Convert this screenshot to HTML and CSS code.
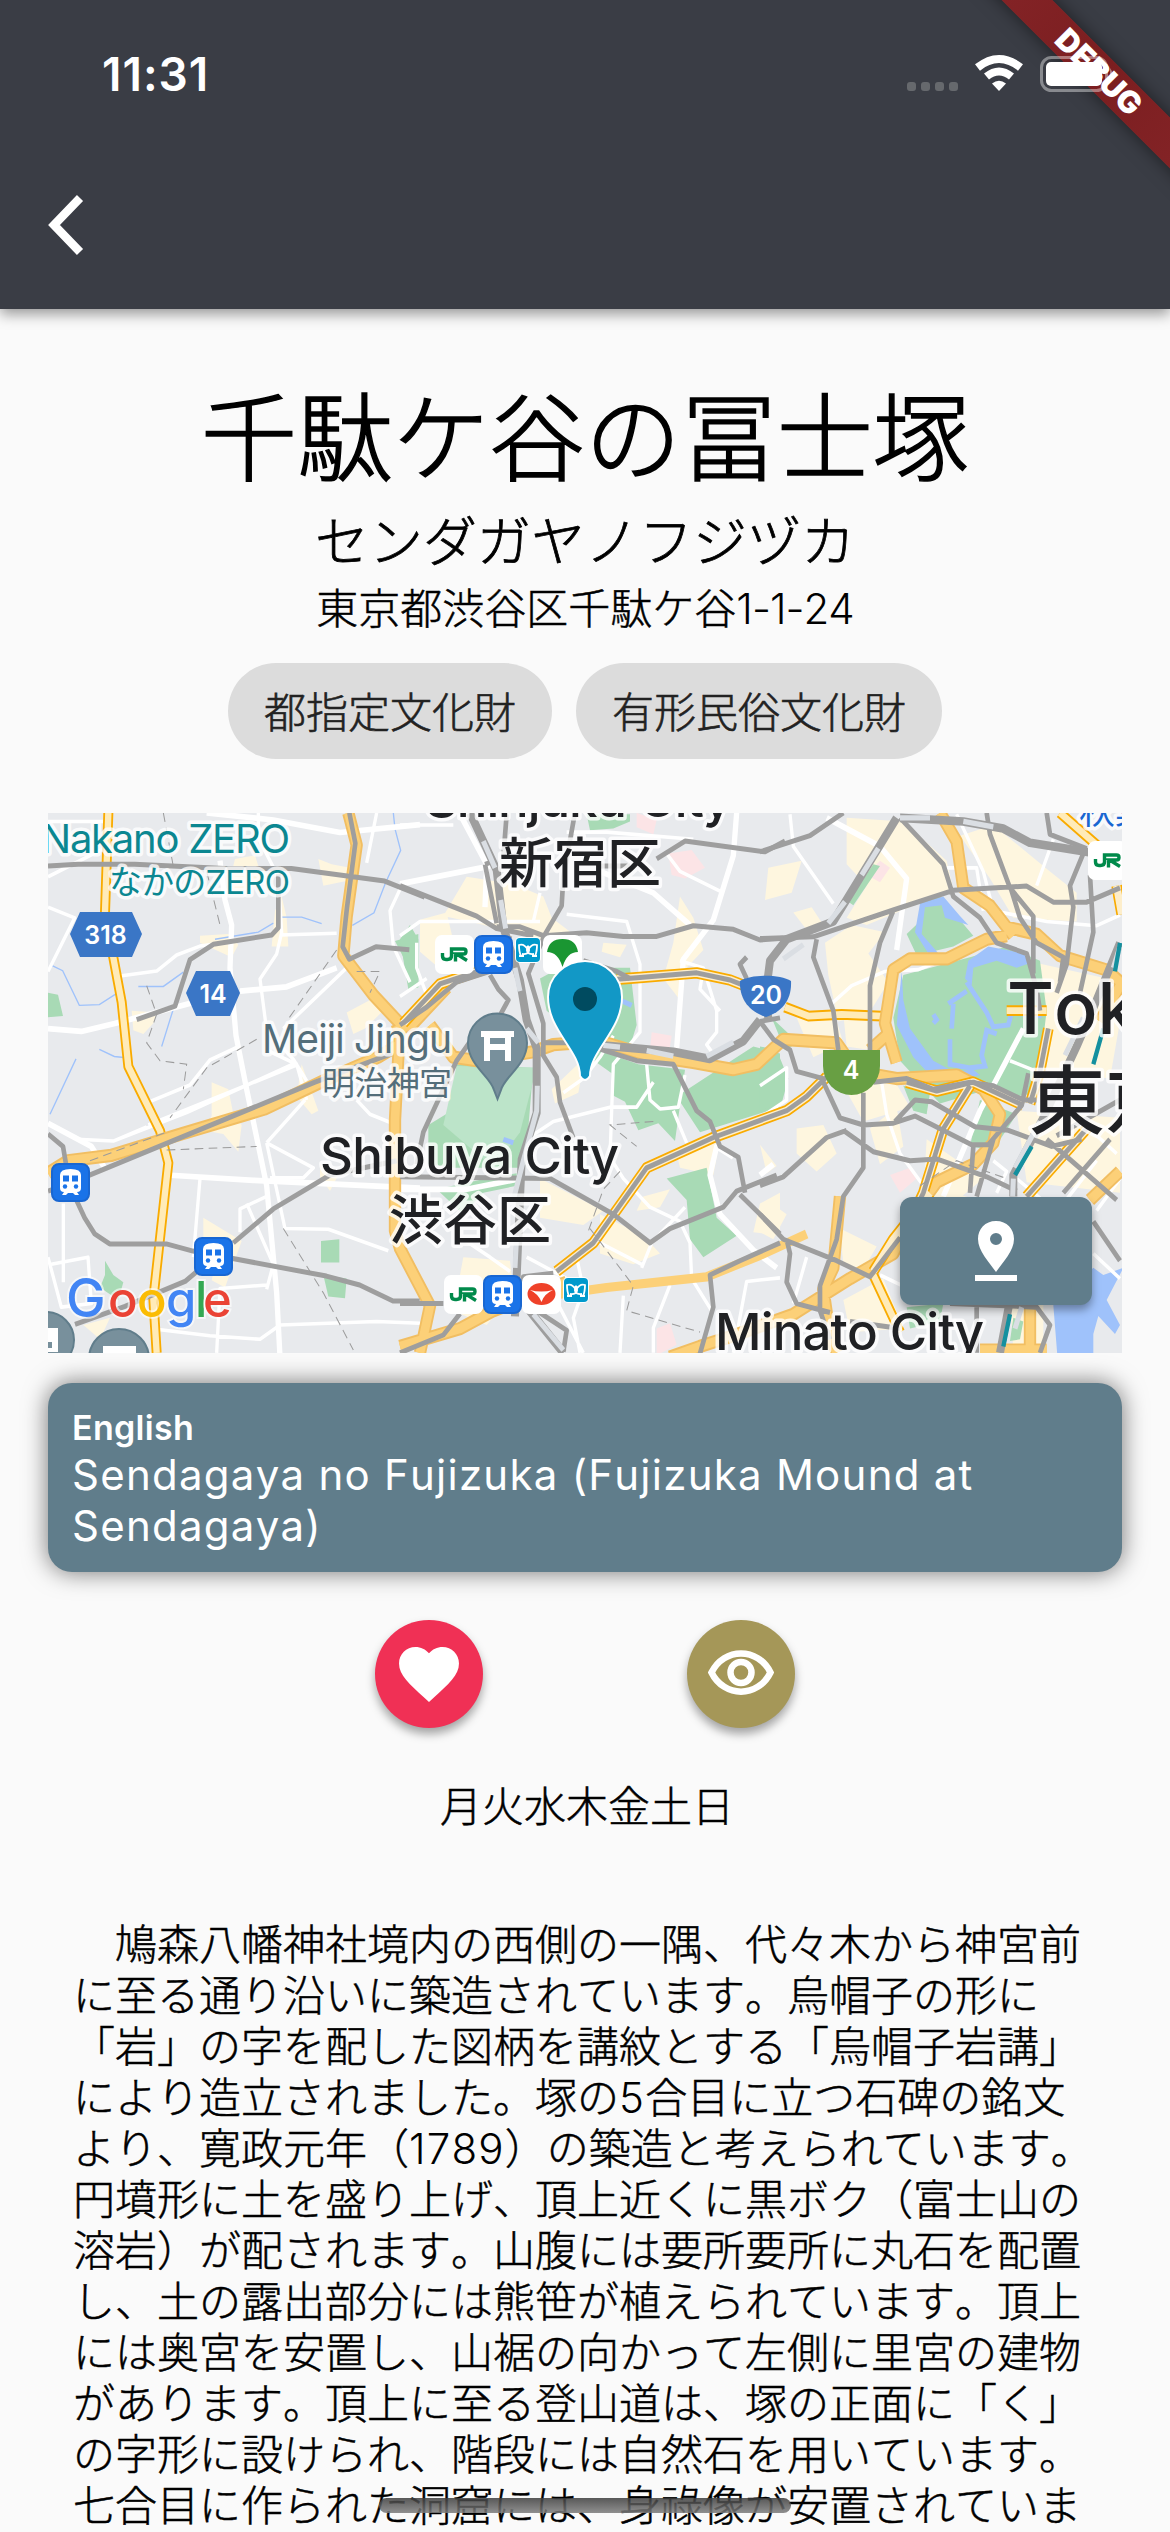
FILE: index.html
```html
<!DOCTYPE html>
<html lang="ja">
<head>
<meta charset="utf-8">
<title>千駄ケ谷の冨士塚</title>
<link rel="stylesheet" href="styles.css">
</head>
<body>
<div class="screen">
<header class="app-bar">
  <div class="status-bar">
    <span class="clock">11:31</span>
    <svg class="status-icons" viewBox="907 50 203 46" aria-hidden="true">
      <g fill="#66696d"><rect x="907" y="82" width="9" height="9" rx="3"/><rect x="921" y="82" width="9" height="9" rx="3"/><rect x="935" y="82" width="9" height="9" rx="3"/><rect x="949" y="82" width="9" height="9" rx="3"/></g>
      <path fill="none" stroke="#fff" stroke-width="8" d="M977.5 67.5Q999 50.500 1020.500 67.500M986.500 76.500Q999 66.500 1011.500 76.500"/>
      <path fill="#fff" d="M992 83.500Q999 77.800 1006 83.500L999 91z"/>
    </svg>
  </div>
  <svg class="back" viewBox="0 0 40 64" aria-hidden="true"><path d="M33 5L7 32L33 59" fill="none" stroke="#fff" stroke-width="8.500"/></svg>
  <div class="banner-clip"><div class="banner">DEBUG</div></div>
  <svg class="battery" viewBox="0 0 78 38" aria-hidden="true"><rect x="2.500" y="2.500" width="65" height="33" rx="10" fill="none" stroke="#fff" stroke-opacity=".4" stroke-width="3"/><path d="M71 13Q76 19 71 25z" fill="#fff" fill-opacity=".4"/><rect x="7" y="7" width="56" height="24" rx="5" fill="#fff"/></svg>
</header>
<main>
  <h1>千駄ケ谷の冨士塚</h1>
  <p class="reading">センダガヤノフジヅカ</p>
  <p class="address">東京都渋谷区千駄ケ谷<span class="num">1-1-24</span></p>
  <div class="chips"><span class="chip">都指定文化財</span><span class="chip">有形民俗文化財</span></div>

  <div class="map">
  <svg viewBox="0 0 1074 540" width="1074" height="540">
  <defs>
    <symbol id="train" viewBox="0 0 39 39"><rect x="1" y="1" width="37" height="37" rx="7" fill="#1a73e8" stroke="#1967d2" stroke-width="2"/><path fill="#fff" d="M9 12Q9 6 19.500 6Q30 6 30 12V25Q30 29 26 29L28 32H24L22 30H17L15 32H11L13 29Q9 29 9 25z"/><path fill="#1a73e8" d="M12 12.500h6v6h-6zM21 12.500h6v6h-6z"/><circle cx="14" cy="23.500" r="2.200" fill="#1a73e8"/><circle cx="25" cy="23.500" r="2.200" fill="#1a73e8"/></symbol>
    <symbol id="jr" viewBox="0 0 39 39"><rect width="39" height="39" rx="7" fill="#fff"/><path d="M7.500 18V21Q7.500 24.500 11 24.500H12.500Q16.500 24.500 16.500 21V14H28.500Q31 14 31 16.500T28.500 19H21.500L32 25.500M20.500 17.500V26.500" fill="none" stroke="#008a4b" stroke-width="3.400"/></symbol>
    <symbol id="metro" viewBox="0 0 26 26"><rect width="26" height="26" rx="5" fill="#fff"/><rect x="1" y="1" width="24" height="24" rx="4" fill="#0099cc"/><path d="M6 19Q4 15 4 8Q9 6 13 13Q17 6 22 8Q22 15 20 19M7 17C14 18 16 13 12 9M19 17C12 18 10 13 14 9M4 19h5M17 19h5" fill="none" stroke="#fff" stroke-width="1.800"/></symbol>
  </defs>
  <rect width="1074" height="540" fill="#e8eaed"/>
  <g transform="translate(-8 -13) scale(.33333 .35714)">
    <g class="built">
      <path d="M585 165l60-10 10 30 30 25-30 30-70 20-20-20zM835 165l40 15 55 10v35l-80 15zM725 270l15 60 5 80h-50l10-100zM480 380l85-5 30 30-20 35-95-40zM275 590l75 5-10 30-30 30-30-10zM920 595l80-40 35 30-60 55-35 15zM515 790l50 20 15 70 25 30-10 75-45-50-60-10 25-40zM785 740l50 130-20 10-45-50zM840 1020l60 20-30 55-30-40zM490 1170l115 65-50 130-40-20 20-80-45-40zM130 1470l80-20-30 60z"/>
      <g transform="translate(1080 0)"><path d="M200 215l140 20 90 35 25 60 85 60-60 15-250-60-100-20zM60 335l80-20 20 80-50 70-50-40zM610 400l70 5-20 35-55-15zM840 270l40 60 30 90-50 50-20 90-50-60 30-100zM455 810l100-90-20 100-70 30zM830 990l130-40-20 100-100-20zM600 1160l130 60 50 50-80 30-100-30zM730 1110l80-20-30 50-70 10zM190 1280l140 10 10 90-80 90-100-40zM1080 965l50 60-30 20zM1080 1130l60-30v120l-80-10zM420 1060l190 90-60 40-130-20zM690 760l120 70-60 20z"/></g>
      <g transform="translate(2160 0)"><path d="M260 50l170 10 130 110 20 80-260 100-60-20 60-90-60-60zM100 315l55-15 35 50-40 25zM195 400l80-50 100 20-50 60 60 80-60 90-90 20-30-130zM600 100l100-30 170 130 80 60v80l-190-10-70-110zM25 190l100-20-30 90-80 20zM110 610l110-20 30 90-90 40zM250 600l80 20v80l-70-10zM800 450l240 50 40 120-30 160-190-20zM250 800l150-20 50 80-140 40zM330 920l80-60 20 110-70 50zM110 920l80-10 40 80-60 50-60-50zM500 950l170 110-90 70-90-20zM550 1090l100 30 50 90-170 30zM770 870l310 20v210l-280-30zM20 1120l60 40-40 70-40-20zM240 1200l110 50-50 80-50-30zM250 1400l120-60 60 140-160 10zM750 1400l100-20v150l-90 10z"/></g>
    </g>
    <g fill="#fce4e6"><path d="M1790 36l60 20-10 40-50-20zM1885 150l70-10 40 50-60 30-40-10zM1835 650l60 10-10 60-55-20zM1850 1480l40-15 20 60-60 30zM2480 210l40-40 30 20-30 40zM2550 1050l60-20 20 30-50 40z"/></g>
    <g class="park">
      <path d="M24 540l30 5 15 60-45 3zM1065 395l70-20v150l-25 5-20-90zM195 1290l25 40 30 20-15 50-55-35 15-35zM843 1235l55-5v65h-55zM850 1330l70 10-5 55-50-5z"/>
      <g transform="translate(1080 0)"><path d="M0 390l30-40 25 40v130l-30 10zM420 500l60-30h210l20 160-20 60-90 20-160-120zM170 740l230 10-25 280-210 0-80-10V910l70-40zM110 1090l150-30 90-15v35l-100 20-60 60zM595 700l120 40 140 15-30 200-50-50-60 20-40-80-40-20v-60l-60-40zM830 830L1010 720l50-30 80 20v150l-240 70zM800 1060l120-30 30 140 60 50-100 60-40-50-10-110zM560 40h130v20l-50 20-70 5z"/></g>
      <g transform="translate(2160 0)"><path d="M480 290l60-20 100 110-60 30-110 25-30-60 45-40zM430 490l200-50 110-30 100 40 20 140-30 230-60 10-120-10-110 30-60-60-60-60-20-120zM0 690l50 10 35 80-20 70-65 20zM660 840l110 40-70 100-70-10zM430 800l80 20-10 60-40-10zM440 1420l110-10-10 50-90 20zM760 1450l30 10-10 50-30 5zM35 610l80 70-40 20zM340 180l20 5-80 110-15-10z"/></g>
    </g>
    <path d="M1250 745l240 5-50 180-80 100-150-120z" fill="#bce4c9"/>
    <g class="water">
      <path d="M2640 290l70-20 50 55 25 25-70-20-10-35-50 5-10 75 55 60-35-5-40-60zM2585 480l-15 150 50 90 60 60 50 10 90-20-20-15-60 5-60-30-70-90-20-80zM2785 450l60-40 110 20 20 25-45 15-60-20-70 20-5 50-20-20zM3040 1415l120-105 30 20 60-20-50 90 40 70-15 25-50-50-15 50v153h-100z"/>
      <path class="waterline" d="M2725 570l55-35M2740 570l-5 70M2680 600l10 15-10 10M2730 670v70l60 10 45-5-10-30 15-70 30 10M2780 510l60 85 20 40 45-5 10-35 90 10M1390 950l30 10M1740 560l35 15"/>
      <path class="river" d="M35 463l33 15 50 97 60-2 50-30M295 522h75l60-40M400 585l-35 105M178 698l45 20 50 5M108 725L30 880M1060 36l5 45 17 60-45 90-35 85-65 35M525 390l130-20 45-25M725 328h60l60 18"/>
    </g>
    <g class="white">
      <path class="major" d="M540 170l15 110 20 70-5 120 18 190 32 150 60 270 30 300 10 180M24 640l100 8 100-22 300-75M600 535l140-12 150-53M380 1050l260 15 500 22M24 905l130 65 40 60M500 36l200 20 200 35 240-22"/>
      <path d="M24 60l170 0M24 215l170-80M24 480l80-150-80-30M240 493l110-14 60-45 70-25 80-10M655 36v70l60 110 10 155-15 60-50 70 20 145 80 80 40 60M720 378l170-5M320 848l130-50 60-70 80-35M325 910l450-170M220 955l220-80 330-140M110 950l110 5 100-40M680 960l140 70-30 28-100 0M680 960l115-120M680 960l55 240 130 2 90 30 90 30M600 1210V1145l80-35M620 1130l80 170-20 70M24 1280l40 140 90-10-10-130-110 20M530 1548l10-180 140-10M330 1480l180 20 150 10 60-40 290-10 130 5M70 1130v220M480 1060l-20 220M1010 36l-30 140M1080 250l-30 60 10 100 50 100M680 700l90 40 30 100M920 470l-190 170M950 840l40 40 80 30"/>
      <g transform="translate(1080 0)"><path class="major" d="M1010 36l-10 120-60 180-90 110-20 250M180 40l80 140-5 120M600 200l160 60 110 90M0 235l270-50M0 1090l200 0 160-30M1000 1000l-50-30-20 80 30 110 100 100 70 50"/>
      <path d="M0 70l160 0M500 90h120l260 20M800 150l40 50 120 55M500 320l180 20 40 120v190l-80 90-10 260 40 60 80 80 90 40 30 60 5 100 60 90M0 380l60-40 360 0M420 260l-20 80M380 950l80-50 170-40h80l50-70M740 740l10 100 30 25 55-5 20-90M820 870l40 90M490 820l60-40 50-60 40-60M50 400v70l40 100M840 450l70 20 40 120v60l-30 35 30 40M0 550l80-50M910 470l-10 60 60 60M380 1280l120 60M600 1240l125 60M725 1310l30-70 100-100M530 1280l20 90-30 80 20 98M660 1548l10-160M760 1548v-70l50-120M1000 1548l40-200 100-10M190 1230l80 50 60 40M440 1350l110 198"/></g>
      <g transform="translate(2160 0)"><path class="major" d="M790 640L660 870 550 1110M200 50l160 80 80 90-30 200M0 1050l40-30"/><path d="M90 40l10 90 120 160M590 40l80 160 30 110 160 30 150 12 70-30M215 570l60-50 100-40 100-5 160-60M0 800l80-50 0 90-80 50M360 760l20 120 40 110 70 90M880 110l-50 130M700 1010l40 30-30 60M750 730l80 30M860 1190l150-180M1010 1150l70-90M100 1410l40-130M360 1330l90 40M1000 1270l80 70M560 190l90 0 20 120M770 1060l90 70M940 880l130 110"/></g>
    </g>
    <g class="yellow">
      <path d="M205 36l-10 280 50 250 20 180 95 180 25 90-45 380 10 152M2235 580l70 25 100-5 120 5M2500 1330l80 160M3060 36l110 90M2900 590l120 0"/>
    </g>
    <g class="yellow-core">
      <path d="M205 36l-10 280 50 250 20 180 95 180 25 90-45 380 10 152M2235 580l70 25 100-5 120 5M2500 1330l80 160M3060 36l110 90M2900 590l120 0"/>
    </g>
    <g class="orange">
      <path d="M24 1045l60-35 130-15 210-60 250-70 180-80 160-65 80-45M925 36l25 90-30 200-10 110 90 110 80 80-15 270 0 310 15 50 90 160-30 132M1060 650l60-25 100-100M1170 630l70 90 70 10 170-25 60-20 140-10 140 40 140 20 120 20 70-15 80-70 160 10 60 80 120 20 180-10 80 40 50 70-20 80-60 60-110 50-70 90-60 110-130 70-170 100-180 60-100 30-90 30M2700 36l50 80 20 130 80 50 50 60 90 20 70 60 140 40 60 50M2900 380l-60 10-120 55-110 0-50 30-25 150 35 110M2550 650l-60 50M2400 1110l-20 200-30 60 20 130 20 48M1080 1530l180-50 100-50 220-80M3240 1040l-90 80M2970 1420v128M2820 1540l200 0M2870 320l50 60M3240 520l-60 100"/>
    </g>
    <g class="orange-core">
      <path d="M24 1045l60-35 130-15 210-60 250-70 180-80 160-65 80-45M925 36l25 90-30 200-10 110 90 110 80 80-15 270 0 310 15 50 90 160-30 132M1060 650l60-25 100-100M1170 630l70 90 70 10 170-25 60-20 140-10 140 40 140 20 120 20 70-15 80-70 160 10 60 80 120 20 180-10 80 40 50 70-20 80-60 60-110 50-70 90-60 110-130 70-170 100-180 60-100 30-90 30M2700 36l50 80 20 130 80 50 50 60 90 20 70 60 140 40 60 50M2900 380l-60 10-120 55-110 0-50 30-25 150 35 110M2550 650l-60 50M2400 1110l-20 200-30 60 20 130 20 48M1080 1530l180-50 100-50 220-80M3240 1040l-90 80M2970 1420v128M2820 1540l200 0M2870 320l50 60M3240 520l-60 100"/>
      <path d="M1550 1385l150-20 300-30 160-60 140-60"/>
    </g>
    <g class="paired">
      <path d="M1730 502l70-5 170-13 100 20 110 40M1550 1320l110-80 160-210 200-85 220-75 60-40 60-55M2600 790l90 25 110-25 150 65M2790 800l-80 120-60 180-20 40M3025 640l-25 120-30 90M2500 1320l60-90 110-130M2960 1110l190-200M1090 625l110-110 130-40M3230 240l15 80"/>
    </g>
    <g class="paired-core">
      <path d="M1730 502l70-5 170-13 100 20 110 40M1550 1320l110-80 160-210 200-85 220-75 60-40 60-55M2600 790l90 25 110-25 150 65M2790 800l-80 120-60 180-20 40M3025 640l-25 120-30 90M2500 1320l60-90 110-130M2960 1110l190-200M1090 625l110-110 130-40M3230 240l15 80"/>
    </g>
    <g class="rail">
      <path d="M1730 502l70-5 170-13 100 20 110 40M1550 1320l110-80 160-210 200-85 220-75 60-40 60-55M2600 790l90 25 110-25 150 65M2790 800l-80 120-60 180-20 40M3025 640l-25 120-30 90M2960 1110l190-200M1090 625l110-110 130-40"/>
      <path d="M24 185l90-5h170l270 12h200l280 35 120 45M928 36l18 85-25 180-13 110 20 35 80-35 100 8M290 615l115-38 45-130 70-43 175-26 20-20v-150M24 935l45 35 20 110 45 90 30 45 45 28h170l80 20 400 70 100 25 100 45h80M85 1075l740-285 230-80M24 1095l80-25M105 1468l150-50 180-70 90-70M580 1240l120-95 170-95 200-40"/>
      <g transform="translate(1080 0)"><path d="M0 240l230 85 60 35 110 20M290 355l70 0 70 25 130-8 110 10h100l110-30 120 10 80 30 70-5M0 630l80-50 90-70 100-30 40-50 20-50M255 180l35 165M255 180l15-5M270 490l25 40 30 30-35 60-60 30-60 80-50 100-50 100-20 90M550 450l100 30 40 20M320 40l-10 120M525 36l-35 180-5 80-50 80-50 110 45 140v90l40 60 10 70 40 100M430 680l110 0 170 50 110 10 70 130 40 30 30 70 55 30 20 100M770 165l85-50 240 30 60-30M600 185l90 0M0 1055l450 5 190 100 110 80 60-40 160-60 40-45 120-45M460 1325l-90 10v70l130 80-10 60M1020 1105l120 110M1140 1240l-120 50-90 40 10 90-40 130M0 1410h130M0 1548l130-50 50-60M1140 610l-60 10M1040 500l-20-40 20-20"/></g>
      <g transform="translate(2160 0)"><path d="M0 145l150-45 100-64M420 50l130 130 30 90 80 60 50 70 90 30 30 100 10 60M0 388l160-5 240-75 180-55 220-12 80 45 100 0 100-40M170 390l-10 50 60 150 15 110M400 310l-40 90-30 120v180M0 620l40 50 50 30 20 60 80 20M190 790l50 100 70 20 90-5 65-20 170 80 50 0 100-110 20-90M340 790l100-10 80 30 110-20 70 10 90 40 40 0M310 820v210l-60 80-20 120-50 130v70l30 80M250 925l90 60 110 25 80-5 150 50 90 40M405 900l60-60 50 5 130 70 100 10 130 45 90-20M680 36l10 60 60 150 70 80v160M860 36l10 60 110 40M970 150l-40 90 10 60-20 160-30 80M990 210l10 160-40 170M750 240l30 90 50 70 80 40-10 70M640 970l-10 130M700 950l-50 160M0 1080l70-25 130-110 60-20M0 1160l70 70 160 60 100 45 90-110M80 1230l10 40-10 80 30 60 100 25M860 950l210 170M890 940l190-100M910 1100l140-150M650 1420v128M570 1410l260 10 40 50-30 78M1000 1180l80 110M270 1460l150 20"/></g>
    </g>
    <g class="trunk-edge"><path d="M1290 36l80 160 20 160 50 150 20 110 30 80 0 180-45 130-20 440M2570 50l-190 290-140 50-50 60-15 110 10 50M1660 685l240 20 110 20 100-50 50-60M2580 50l190 10 120 20 80 40 70 10 130 20M3240 400l-70 160-60 130-100 200-90 160 0 60M2910 1400l-30 148M1460 1420l110 128"/></g>
    <g class="trunk"><path d="M1330 115l35 75M1382 280l15 80M1425 470l15 65M1460 640l35 40M1492 800l-2 70-40 140M1450 1010l-30 110M1430 1220l-5 90M2515 135l-50 75M2415 285l-50 60M2290 405l-60 40M1690 687l50 5M1820 702l80 15M2000 718l80-40M2580 50l90 0M2770 60l90 15M3240 410l-20 60M3130 610l-55 105M3000 900l-75 130M2920 1060l-2 50M2945 1420l-20 60M1480 1440l90 100"/></g>
    <path d="M3240 400l-15 80M3190 640l-30 100M2975 970l-50 80M2910 1440l-20 90" fill="none" stroke="#14909f" stroke-width="13"/>
    <path class="dashed" d="M370 36l30 150M500 200l40 150M320 520l30 80-30 80 40 50 80 10-10 70M650 670l-150 80-110 140M380 980l270-10M890 420L740 620M150 1010l230-80M950 480l70 0-30 60M1840 900l-130 10 80 60M1740 1040l-50 50-50 130M1650 1200l130 160-20 70 220 60M2640 1080l110-70 150 50M730 1200l120 180 90 160"/>
  </g>

  <g class="label teal"><text x="-7" y="40" font-size="40" textLength="249">Nakano ZERO</text><text x="61" y="81" font-size="33" textLength="181">なかのZERO</text></g>
  <g class="label slate"><text x="214" y="240" font-size="39" textLength="190">Meiji Jingu</text><text x="274" y="282" font-size="33" textLength="130">明治神宮</text></g>
  <g class="label city"><text x="272" y="361" font-size="51" textLength="299">Shibuya City</text><text x="341" y="427" font-size="54">渋谷区</text><text x="377" y="4" font-size="51" textLength="307">Shinjuku City</text><text x="451" y="70" font-size="54">新宿区</text><text x="667" y="537" font-size="51" textLength="269">Minato City</text><text x="959" y="221" font-size="72">Tokyo</text><text x="981" y="316" font-size="76">東京</text></g>
  <g class="label station"><text x="1031" y="11" font-size="36">秋葉原</text></g>
  <g fill="#3a76c6"><path d="M32 99h52l10 22-10 23H32L22 121zM148 158h34l10 22-10 23h-34l-10-23z"/><path d="M692 168C703 161 732 161 743 168C744 187 734 199 718 204C702 199 691 187 692 168z"/></g>
  <path d="M775 237h57v16a28.500 29 0 0 1-57 0z" fill="#689f43"/>
  <g class="road-no"><text x="57.500" y="131">318</text><text x="165" y="190">14</text><text x="718" y="191">20</text><text x="803" y="266">4</text></g>
  <use href="#train" x="3" y="350" width="39" height="39"/><use href="#train" x="146" y="424" width="39" height="39"/>
  <use href="#jr" x="387" y="122" width="39" height="39"/><use href="#train" x="426" y="122" width="39" height="39"/><use href="#metro" x="467" y="124" width="26" height="26"/>
  <rect x="495" y="122" width="39" height="39" rx="7" fill="#fff"/><path d="M499 139Q501 126 514.500 126T530 139Q519 139 514.500 154Q510 139 499 139z" fill="#1a9632"/>
  <use href="#jr" x="396" y="462" width="39" height="39"/><use href="#train" x="435" y="462" width="39" height="39"/><rect x="474" y="462" width="39" height="39" rx="7" fill="#fff"/><ellipse cx="493.500" cy="481" rx="14" ry="11" fill="#ef4129"/><path d="M482 477q11 3 23 0q-9 4-11.500 12q-3-8-11.500-12z" fill="#fff"/><use href="#metro" x="515" y="464" width="26" height="26"/>
  <use href="#jr" x="1040" y="28" width="39" height="39"/>
  <g class="poi"><path d="M449.500 286L446 277C443 264 420 252 420 230a29.500 29.500 0 0 1 59 0c0 22-23 34-26 47z"/><circle cx="-2" cy="527" r="28"/><circle cx="71" cy="546" r="30"/></g>
  <path d="M433 218h33v6h-3v24h-6v-11h-15v11h-6v-24h-3zM442 225v6h15v-6zM0 515h10v24H0v-4h4v-6H0zM55 533h33v7H55z" fill="#fff" fill-rule="evenodd"/>
  <path d="M532 263C532 237 500 218 500 184a37 36 0 0 1 74 0c0 34-32 53-32 79q-5 8-10 0z" fill="#1298c6" stroke="#fff" stroke-width="2"/><circle cx="537" cy="186" r="12" fill="#004b60"/>
  <text class="google" y="504" x="18 60 89 118 147 155"><tspan class="google-g" fill="#4285f4">G</tspan><tspan fill="#ea4335">o</tspan><tspan fill="#fbbc04">o</tspan><tspan fill="#4285f4">g</tspan><tspan fill="#34a853">l</tspan><tspan fill="#ea4335">e</tspan></text>
  </svg>
  <button class="map-button" aria-label="地図"><svg viewBox="0 0 48 62" width="48" height="62"><path fill="#fff" fill-rule="evenodd" d="M24 1C13 1 6 9 6 19c0 12 11 23 18 33c7-10 18-21 18-33C42 9 35 1 24 1zM24 13a6 6 0 1 1 0 12a6 6 0 0 1 0-12zM3 55h42v6H3z"/></svg></button>
  </div>

  <section class="card"><h2>English</h2><p>Sendagaya no Fujizuka (Fujizuka Mound at<br>Sendagaya)</p></section>
  <div class="actions">
    <button class="round like" aria-label="お気に入り"><svg viewBox="2 3 20 18.350" width="60" height="55"><path fill="#fff" d="M12 21.350l-1.450-1.320C5.400 15.360 2 12.280 2 8.500 2 5.420 4.420 3 7.500 3c1.740 0 3.410.81 4.500 2.090C13.090 3.810 14.760 3 16.500 3 19.580 3 22 5.420 22 8.500c0 3.780-3.400 6.860-8.550 11.540L12 21.350z"/></svg></button>
    <button class="round seen" aria-label="見た"><svg viewBox="0 0 66 46" width="66" height="46"><path d="M3.500 22.500C16-3 50-3 62.500 22.500C50 48 16 48 3.500 22.500z" fill="none" stroke="#fff" stroke-width="6.500"/><circle cx="33" cy="22.500" r="10.500" fill="none" stroke="#fff" stroke-width="6.500"/></svg></button>
  </div>
  <p class="days">月火水木金土日</p>
  <p class="body-text">　鳩森八幡神社境内の西側の一隅、代々木から神宮前<br>に至る通り沿いに築造されています。烏帽子の形に<br>「岩」の字を配した図柄を講紋とする「烏帽子岩講」<br>により造立されました。塚の<span class="digits">5</span>合目に立つ石碑の銘文<br>より、寛政元年（<span class="digits">1789</span>）の築造と考えられています。<br>円墳形に土を盛り上げ、頂上近くに黒ボク（富士山の<br>溶岩）が配されます。山腹には要所要所に丸石を配置<br>し、土の露出部分には熊笹が植えられています。頂上<br>には奥宮を安置し、山裾の向かって左側に里宮の建物<br>があります。頂上に至る登山道は、塚の正面に「く」<br>の字形に設けられ、階段には自然石を用いています。<br>七合目に作られた洞窟には、身祿像が安置されていま</p>
</main>
<div class="home-indicator"></div>
</div>
</body>
</html>
```
FILE: styles.css
```css
* { box-sizing: border-box; margin: 0; padding: 0; }
body { background: #fafafa; color: #000; font-family: "Noto Sans CJK JP", sans-serif; font-kerning: none; }
button { border: 0; }
.screen { position: relative; width: 1170px; height: 2532px; overflow: hidden; }

.app-bar { position: relative; height: 309px; padding-top: 51px; background: #3a3d45; box-shadow: 0 5px 13px rgba(0,0,0,.4); }
.status-bar { display: flex; justify-content: space-between; align-items: center; height: 46px; padding: 0 60px 0 102px; }
.clock { font: 600 46px/50px Inter, sans-serif; color: #fff; letter-spacing: 1px; }
.status-icons { width: 203px; height: 46px; margin-top: -2px; }
.back { display: block; width: 40px; height: 64px; margin: 96px 0 0 47px; }
.banner-clip { position: absolute; inset: 0 0 0 auto; width: 260px; overflow: hidden; }
.banner { position: absolute; left: 39px; top: 54px; width: 300px; height: 36px; transform: rotate(45deg); background: linear-gradient(90deg, #852427, #7b1e20 50%, #852427); box-shadow: 0 0 18px rgba(0,0,0,.5); color: #fff; font: 900 31px/36px Inter, sans-serif; text-align: center; }
.battery { position: absolute; left: 1039px; top: 55px; width: 78px; height: 38px; }

main { display: flex; flex-direction: column; align-items: center; padding-top: 62px; white-space: nowrap; }
h1 { font-size: 96px; font-weight: 300; line-height: 122px; -webkit-text-stroke: 1.500px #000; }
.reading { margin-top: 6px; font-size: 54px; font-weight: 300; line-height: 80px; -webkit-text-stroke: .8px #000; }
.address { height: 60px; margin-top: -3px; font-size: 42px; font-weight: 300; line-height: 60px; -webkit-text-stroke: .5px #000; }
.num { font-family: Inter, sans-serif; line-height: 1; letter-spacing: -1px; -webkit-text-stroke: 0; }
.chips { display: flex; gap: 24px; margin-top: 27px; }
.chip { height: 96px; padding: 0 36px; border-radius: 48px; background: #dcdcdc; color: #222; font-size: 42px; font-weight: 300; line-height: 94px; -webkit-text-stroke: .6px #222; }

.map { position: relative; width: 1074px; height: 540px; margin-top: 54px; overflow: hidden; }
.map > svg { display: block; }
.built { fill: #fef6df; }
.park { fill: #a8dab5; }
.water { fill: #9fc2fb; }
.waterline { fill: none; stroke: #9fc2fb; stroke-width: 14; }
.river { fill: none; stroke: #9fc2fb; stroke-width: 4; }
.white, .yellow, .yellow-core, .orange, .orange-core, .paired, .paired-core, .rail, .trunk, .trunk-edge { fill: none; stroke-linejoin: round; }
.white { stroke: #fff; stroke-width: 10; }
.major { stroke-width: 16; }
.yellow { stroke: #f9ab00; stroke-width: 30; }
.yellow-core { stroke: #ffebb8; stroke-width: 19; }
.paired { stroke: #f9ab00; stroke-width: 32; }
.paired-core { stroke: #fdeecb; stroke-width: 22; }
.orange { stroke: #f1be62; stroke-width: 37; }
.orange-core { stroke: #fcd078; stroke-width: 26; }
.rail { stroke: #9e9e9e; stroke-width: 14; }
.trunk-edge { stroke: #9e9e9e; stroke-width: 24; }
.trunk { stroke: #dadee3; stroke-width: 15; }
.dashed { fill: none; stroke: #9b9b9b; stroke-width: 3; stroke-dasharray: 26 16; }
.label { font-family: Inter, "Noto Sans CJK JP", sans-serif; paint-order: stroke; stroke: rgba(255,255,255,.8); stroke-width: 7px; stroke-linejoin: round; }
.teal { fill: #0b8791; }
.slate { fill: #546e7a; }
.city { fill: #202124; font-weight: 500; }
.station { fill: #1967d2; }
.road-no { fill: #fff; font: 600 25px Inter, sans-serif; text-anchor: middle; }
.poi { fill: #78909c; stroke: #607d8b; stroke-width: 2; }
.google { font: 500 49px Inter, sans-serif; paint-order: stroke; stroke: rgba(255,255,255,.6); stroke-width: 4px; }
.google-g { font-size: 53px; }
.map-button { position: absolute; left: 852px; top: 384px; width: 192px; height: 108px; display: grid; place-items: center; border-radius: 12px; background: #607d8b; box-shadow: 0 5px 9px rgba(0,0,0,.35); }

.card { width: 1074px; height: 189px; margin-top: 30px; padding: 24px; border-radius: 24px; background: #607d8b; color: #fff; box-shadow: 0 0 24px rgba(0,0,0,.55); font-family: Inter, sans-serif; }
.card h2 { font-size: 34px; line-height: 42px; font-weight: 600; letter-spacing: .3px; }
.card p { font-size: 42px; line-height: 51px; font-weight: 400; letter-spacing: 1.250px; }
.actions { display: flex; gap: 204px; margin-top: 48px; }
.round { width: 108px; height: 108px; border-radius: 50%; display: grid; place-items: center; box-shadow: 0 6px 10px rgba(0,0,0,.35); }
.round svg { display: block; }
.seen svg { margin-top: -3px; }
.like { background: #f03055; }
.seen { background: #a59758; }
.days { margin-top: 48px; padding-left: 4px; font-size: 42px; font-weight: 300; line-height: 56px; -webkit-text-stroke: .5px #000; }
.body-text { align-self: flex-start; margin: 84px 0 0 73px; font-size: 42px; font-weight: 300; line-height: 51px; text-spacing-trim: space-all; -webkit-text-stroke: .5px #000; }
.digits { font-family: Inter, sans-serif; line-height: 1; font-weight: 350; letter-spacing: 1.200px; -webkit-text-stroke: 0; }
.home-indicator { position: absolute; left: 379px; top: 2498px; width: 412px; height: 15px; border-radius: 8px; background: linear-gradient(rgba(60,60,60,.85), rgba(125,125,125,.85)); }
```
